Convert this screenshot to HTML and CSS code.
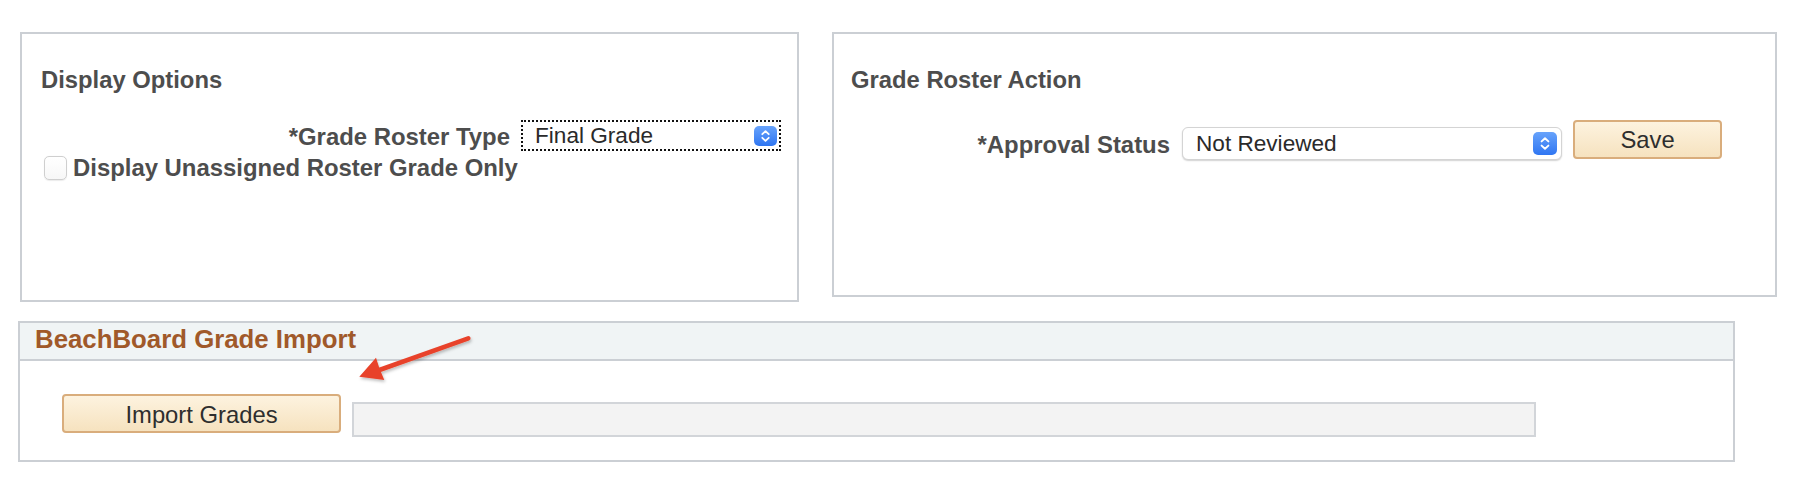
FILE: index.html
```html
<!DOCTYPE html>
<html lang="en">
<head>
<meta charset="utf-8">
<title>Grade Roster</title>
<link rel="stylesheet" href="styles.css">
</head>
<body>
<div class="page">
  <div class="top-row">
    <section class="panel panel-display">
      <h2 class="panel-title">Display Options</h2>
      <div class="field-row">
        <span class="field-label label-roster">*Grade Roster Type</span>
        <div class="select select-focus">
          <span class="select-text">Final Grade</span>
          <svg class="stepper stepper-small" viewBox="0 0 23 20" aria-hidden="true">
            <defs>
              <linearGradient id="sg1" x1="0" y1="0" x2="0" y2="1">
                <stop offset="0" stop-color="#68a3fb"/>
                <stop offset="1" stop-color="#2f76f2"/>
              </linearGradient>
            </defs>
            <rect x="0" y="0" width="23" height="20" rx="5" fill="url(#sg1)"/>
            <path d="M8.3 8.2 L11.5 5.2 L14.7 8.2" fill="none" stroke="#fff" stroke-width="1.8" stroke-linecap="round" stroke-linejoin="round"/>
            <path d="M8.3 11.8 L11.5 14.8 L14.7 11.8" fill="none" stroke="#fff" stroke-width="1.8" stroke-linecap="round" stroke-linejoin="round"/>
          </svg>
        </div>
      </div>
      <div class="check-row">
        <span class="checkbox"></span>
        <span class="check-label">Display Unassigned Roster Grade Only</span>
      </div>
    </section>
    <section class="panel panel-action">
      <h2 class="panel-title">Grade Roster Action</h2>
      <div class="action-row">
        <span class="field-label label-approval">*Approval Status</span>
        <div class="select select-mac">
          <span class="select-text">Not Reviewed</span>
          <svg class="stepper stepper-large" viewBox="0 0 24 23" aria-hidden="true">
            <defs>
              <linearGradient id="sg2" x1="0" y1="0" x2="0" y2="1">
                <stop offset="0" stop-color="#68a3fb"/>
                <stop offset="1" stop-color="#2f76f2"/>
              </linearGradient>
            </defs>
            <rect x="0" y="0" width="24" height="23" rx="5" fill="url(#sg2)"/>
            <path d="M8.6 9.4 L12 6.2 L15.4 9.4" fill="none" stroke="#fff" stroke-width="1.9" stroke-linecap="round" stroke-linejoin="round"/>
            <path d="M8.6 13.6 L12 16.8 L15.4 13.6" fill="none" stroke="#fff" stroke-width="1.9" stroke-linecap="round" stroke-linejoin="round"/>
          </svg>
        </div>
        <button class="btn btn-save" type="button">Save</button>
      </div>
    </section>
  </div>

  <section class="import-panel">
    <div class="import-header">BeachBoard Grade Import</div>
    <div class="import-body">
      <button class="btn btn-import" type="button">Import Grades</button>
      <div class="import-field"></div>
    </div>
    <svg class="arrow" viewBox="0 0 130 60" aria-hidden="true">
      <defs>
        <filter id="ash" x="-20%" y="-30%" width="140%" height="160%">
          <feDropShadow dx="1" dy="2" stdDeviation="1.5" flood-color="#000" flood-opacity="0.25"/>
        </filter>
      </defs>
      <g filter="url(#ash)" fill="#e8432b" stroke="none">
        <path d="M118.3 8.3 L28 40.5" stroke="#e8432b" stroke-width="4.6" stroke-linecap="round" fill="none"/>
        <path d="M9.3 46.7 L26 27.7 L29.5 38.6 L34.3 50 Z"/>
      </g>
    </svg>
  </section>
</div>
</body>
</html>
```

FILE: styles.css
```css
* {
  box-sizing: border-box;
}

html, body {
  margin: 0;
  padding: 0;
  background: #ffffff;
}

body {
  font-family: "Liberation Sans", Arial, Helvetica, sans-serif;
  color: #4d4d4d;
  width: 1802px;
  height: 478px;
  overflow: hidden;
}

.page {
  padding: 32px 0 0 20px;
}

.top-row {
  display: flex;
  align-items: flex-start;
  gap: 33px;
}

.panel {
  border: 2px solid #cbcfd4;
  padding-top: 32px;
  background: #fff;
}

.panel-display {
  width: 779px;
  height: 270px;
}

.panel-action {
  width: 945px;
  height: 265px;
}

.panel-title {
  margin: 0 0 26px 0;
  font-size: 23.8px;
  line-height: 28px;
  font-weight: bold;
  color: #4d4d4d;
}

.panel-display .panel-title {
  padding-left: 19px;
}

.panel-action .panel-title {
  padding-left: 17px;
}

.field-row {
  display: flex;
  align-items: flex-start;
  gap: 11px;
}

.field-label {
  font-size: 23.9px;
  line-height: 28px;
  font-weight: bold;
  text-align: right;
  color: #4d4d4d;
  white-space: nowrap;
}

.label-roster {
  width: 488px;
  margin-top: 2.5px;
}

.select {
  display: flex;
  align-items: center;
  justify-content: space-between;
  background: #fff;
  font-size: 22.6px;
  color: #2a2a2a;
  white-space: nowrap;
}

.select-focus {
  width: 260px;
  height: 31px;
  border: 2px dotted #111;
  padding: 0 2px 0 12px;
}

.select-mac {
  width: 380px;
  height: 33px;
  margin-top: 7px;
  border: 1px solid #d4d4d4;
  border-radius: 6px;
  box-shadow: 0 1px 1.5px rgba(0, 0, 0, 0.18);
  padding: 0 4px 0 13px;
}

.select-text {
  line-height: 26px;
}

.stepper {
  display: block;
  flex: none;
}

.stepper-small {
  width: 23px;
  height: 20px;
}

.stepper-large {
  width: 24px;
  height: 23px;
}

.check-row {
  display: flex;
  align-items: flex-start;
  margin-top: 3px;
  padding-left: 22px;
  gap: 6px;
}

.checkbox {
  display: block;
  width: 23px;
  height: 24px;
  margin-top: 1.5px;
  border: 1px solid #cfcfcf;
  border-radius: 5px;
  background: linear-gradient(#ffffff, #f7f7f7);
  box-shadow: 0 0.5px 1px rgba(0, 0, 0, 0.08);
}

.check-label {
  font-size: 23.9px;
  line-height: 28px;
  font-weight: bold;
  color: #4d4d4d;
  white-space: nowrap;
}

.action-row {
  display: flex;
  align-items: flex-start;
}

.label-approval {
  width: 336px;
  margin-top: 10.5px;
  margin-right: 12px;
}

.btn {
  font-family: "Liberation Sans", Arial, Helvetica, sans-serif;
  font-size: 23.8px;
  color: #2e2e2e;
  border: 2px solid #d9ad7c;
  border-radius: 4px;
  background: linear-gradient(#fdf3df, #f6e2bf);
  padding: 0;
  margin: 0;
  cursor: pointer;
}

.btn-save {
  width: 149px;
  height: 39px;
  margin-left: 11px;
  margin-top: 0;
  line-height: 33px;
}

.import-panel {
  position: relative;
  margin-top: 19px;
  margin-left: -2px;
  width: 1717px;
  height: 141px;
  border: 2px solid #cbcfd4;
}

.import-header {
  height: 38px;
  background: #f0f4f5;
  border-bottom: 2px solid #cbcfd4;
  padding: 0 0 4px 15px;
  font-size: 25.8px;
  line-height: 32px;
  font-weight: bold;
  color: #a0592a;
}

.import-body {
  display: flex;
  align-items: flex-start;
  padding: 33px 0 0 42px;
  gap: 11px;
}

.btn-import {
  width: 279px;
  height: 39px;
  padding-top: 3px;
  line-height: 30px;
}

.import-field {
  width: 1184px;
  height: 35px;
  margin-top: 8px;
  background: #f3f3f3;
  border: 2px solid #d2d5d9;
}

.arrow {
  position: absolute;
  left: 330px;
  top: 7px;
  width: 130px;
  height: 60px;
  overflow: visible;
}
```
